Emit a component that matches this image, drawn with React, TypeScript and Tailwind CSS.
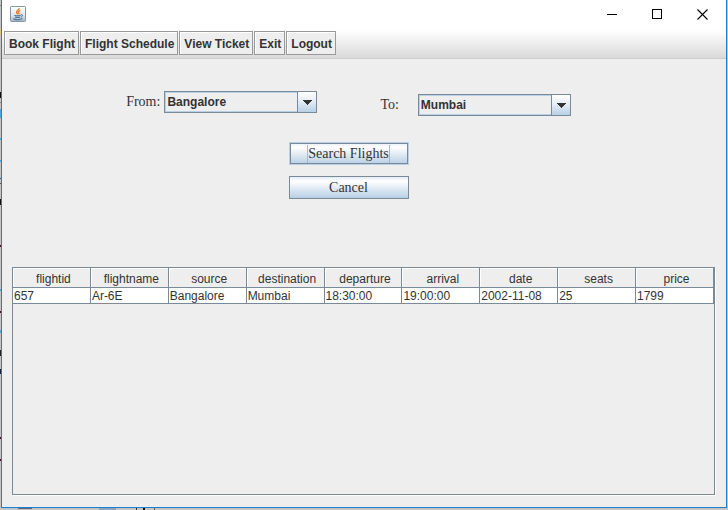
import React, { useState } from "react";

const menuItems = ["Book Flight", "Flight Schedule", "View Ticket", "Exit", "Logout"];
const cities = ["Bangalore", "Mumbai", "Delhi", "Chennai"];
const columns = [
  "flightid",
  "flightname",
  "source",
  "destination",
  "departure",
  "arrival",
  "date",
  "seats",
  "price",
];
const flights = [
  ["657", "Ar-6E", "Bangalore", "Mumbai", "18:30:00", "19:00:00", "2002-11-08", "25", "1799"],
];

const serif = "font-['Liberation_Serif',serif] text-[14px] leading-[18px]";

function JavaIcon() {
  return (
    <svg width="16" height="16" viewBox="0 0 16 16" aria-hidden="true">
      <defs>
        <linearGradient id="tile" x1="0" y1="0" x2="0" y2="1">
          <stop offset="0" stopColor="#ffffff" />
          <stop offset="0.6" stopColor="#dfe5ea" />
          <stop offset="1" stopColor="#9fb2c2" />
        </linearGradient>
      </defs>
      <rect x="0.5" y="0.5" width="15" height="15" rx="1" fill="url(#tile)" stroke="#8496a5" />
      <path d="M9 2.2C9.6 4 6 4.8 6.7 6.4C7 7.2 7.7 7.6 7.6 8.4" fill="none" stroke="#ea7a24" strokeWidth="1.5" />
      <path d="M10.4 4.5C8.6 5.2 8.2 6 8.8 6.8C9.2 7.4 9 8 8.6 8.4" fill="none" stroke="#ea7a24" strokeWidth="1.2" />
      <path d="M4.4 9.2C6 9.9 9 9.9 10.6 9.2M5 10.9C6.4 11.5 8.8 11.5 10.2 10.9M3.4 12.8C5.5 14 10 14 12.4 12.6" fill="none" stroke="#45708f" strokeWidth="1.1" />
      <path d="M10.8 8.8C13.2 8.2 13.2 10.4 10.9 11" fill="none" stroke="#45708f" strokeWidth="1" />
    </svg>
  );
}

function TitleBar() {
  const control = "flex h-7 w-[45px] items-center justify-center";
  return (
    <header className="flex h-[30px] items-start justify-between bg-white pr-px pl-2">
      <div className="pt-[6px]">
        <JavaIcon />
      </div>
      <div className="flex">
        <button type="button" aria-label="Minimize" className={control}>
          <svg width="11" height="11" shapeRendering="crispEdges">
            <path d="M0 5.5H10" stroke="#000" />
          </svg>
        </button>
        <button type="button" aria-label="Maximize" className={control}>
          <svg width="11" height="11" shapeRendering="crispEdges">
            <rect x="0.5" y="0.5" width="9" height="9" fill="none" stroke="#000" />
          </svg>
        </button>
        <button type="button" aria-label="Close" className={control}>
          <svg width="11" height="11">
            <path d="M0.5 0.5L10.5 10.5M10.5 0.5L0.5 10.5" stroke="#000" strokeWidth="1.1" />
          </svg>
        </button>
      </div>
    </header>
  );
}

function MenuBar() {
  return (
    <nav className="flex h-[29px] gap-px border-b border-[#cccccc] bg-linear-to-b from-white to-[#dadada] px-[2px] pt-px">
      {menuItems.map((item) => (
        <button
          key={item}
          type="button"
          className="h-6 border border-[#999999] bg-[#eeeeee] pt-[2px] pr-[3px] pl-1 text-[12px] leading-[14px] font-bold whitespace-nowrap text-[#333333] shadow-[inset_1px_1px_0_#ffffff]"
        >
          {item}
        </button>
      ))}
    </nav>
  );
}

function CitySelect({ id, initial }: { id: string; initial: string }) {
  const [city, setCity] = useState(initial);
  return (
    <div className="relative h-[22px] w-[153px]">
      <select
        id={id}
        value={city}
        onChange={(e) => setCity(e.target.value)}
        className="block h-full w-full appearance-none border border-[#7a8a99] bg-[#eeeeee] pr-5 pl-[2px] text-[12px] leading-[14px] font-bold text-[#333333] shadow-[inset_0_0_0_1px_#b8cfe5] outline-none"
      >
        {cities.map((name) => (
          <option key={name}>{name}</option>
        ))}
      </select>
      <span className="pointer-events-none absolute inset-y-0 right-0 flex w-5 items-center justify-center border border-[#7a8a99] bg-linear-to-b from-white via-[#e2ebf4] to-[#b8cfe5]">
        <svg width="10" height="5" viewBox="0 0 10 5" shapeRendering="crispEdges">
          <path d="M0 0H10L5 5Z" fill="#333333" />
        </svg>
      </span>
    </div>
  );
}

function SearchForm() {
  const metal =
    "flex h-[23px] w-[120px] items-center justify-center border border-[#7a8a99] bg-linear-to-b from-[#e4edf5] via-white via-20% to-[#b8cfe5] text-[#333333]";
  return (
    <form className="flex flex-col pr-[30px]" onSubmit={(e) => e.preventDefault()}>
      <div className="flex items-start justify-center">
        <div className="flex items-center gap-1">
          <label htmlFor="from" className={`${serif} text-[#333333]`}>
            From:
          </label>
          <CitySelect id="from" initial="Bangalore" />
        </div>
        <div className="mt-[3px] ml-[63px] flex items-center gap-[19px]">
          <label htmlFor="to" className={`${serif} text-[#333333]`}>
            To:
          </label>
          <CitySelect id="to" initial="Mumbai" />
        </div>
      </div>
      <div className="mt-[26px] flex flex-col items-center gap-[11px]">
        <button
          type="submit"
          className={`${metal} shadow-[inset_0_0_0_1px_#7a8a99] outline outline-1 -outline-offset-1 outline-[#b8cfe5]`}
        >
          <span className={`${serif} border-x border-[#a3b8cc]`}>Search Flights</span>
        </button>
        <button type="button" className={metal}>
          <span className={serif}>Cancel</span>
        </button>
      </div>
    </form>
  );
}

function FlightTable() {
  return (
    <div className="flex-1 border border-[#7a8a99] shadow-[1px_1px_0_#ffffff]">
      <table className="w-full table-fixed border-separate border-spacing-0 text-[12px] leading-[14px] text-[#333333]">
        <thead>
          <tr>
            {columns.map((name) => (
              <th
                key={name}
                scope="col"
                className="h-5 border-r border-b border-[#7a8a99] p-0 pt-[2px] pl-1 text-center font-normal shadow-[inset_1px_1px_0_#ffffff]"
              >
                {name}
              </th>
            ))}
          </tr>
        </thead>
        <tbody>
          {flights.map((row) => (
            <tr key={row[0]}>
              {row.map((value, i) => (
                <td key={columns[i]} className="h-4 border-r border-b border-[#7a8a99] bg-white p-0 pl-px">
                  {value}
                </td>
              ))}
            </tr>
          ))}
        </tbody>
      </table>
    </div>
  );
}

// Slivers of the desktop that stay visible around the window frame.
function DesktopEdge() {
  const marks: [number, number, string][] = [
    [5, 1, "#7a8a99"], [29, 6, "#e3c489"], [92, 6, "#101010"], [102, 1, "#888888"], [109, 9, "#4fa6dc"],
    [138, 2, "#4fa6dc"], [160, 2, "#4fa6dc"], [178, 1, "#1565a8"], [183, 1, "#555555"],
    [199, 6, "#101010"], [245, 2, "#4a1030"], [289, 2, "#4fa6dc"], [311, 2, "#4a1030"],
    [330, 3, "#4fa6dc"], [350, 6, "#222222"], [369, 5, "#102038"], [437, 2, "#4a1030"],
    [459, 2, "#4a1030"],
  ];
  return (
    <svg className="absolute top-0 left-0" width="1" height="510" aria-hidden="true">
      {marks.map(([y, h, fill]) => (
        <rect key={y} x="0" y={y} width="1" height={h} fill={fill} />
      ))}
    </svg>
  );
}

function DesktopBottom() {
  return (
    <svg className="absolute bottom-0 left-0" width="200" height="2" aria-hidden="true">
      <rect x="18" width="14" height="1" fill="#5c6673" />
      <rect x="99" width="17" height="2" fill="#93a4bd" />
      <rect x="136" width="1" height="2" fill="#333333" />
      <rect x="143" width="2" height="2" fill="#111111" />
      <rect x="154" width="1" height="2" fill="#666666" />
    </svg>
  );
}

export default function App() {
  return (
    <div className="relative flex min-h-screen flex-col bg-[#c4c4c4] px-px pb-[2px] font-['Liberation_Sans',Arial,sans-serif]">
      <DesktopEdge />
      <DesktopBottom />
      <div className="flex flex-1 flex-col border-x border-b border-[#1a80d2] bg-[#eeeeee]">
        <TitleBar />
        <MenuBar />
        <main className="flex flex-1 flex-col gap-[68px] pt-8 pr-[11px] pb-3 pl-[10px]">
          <SearchForm />
          <FlightTable />
        </main>
      </div>
    </div>
  );
}
